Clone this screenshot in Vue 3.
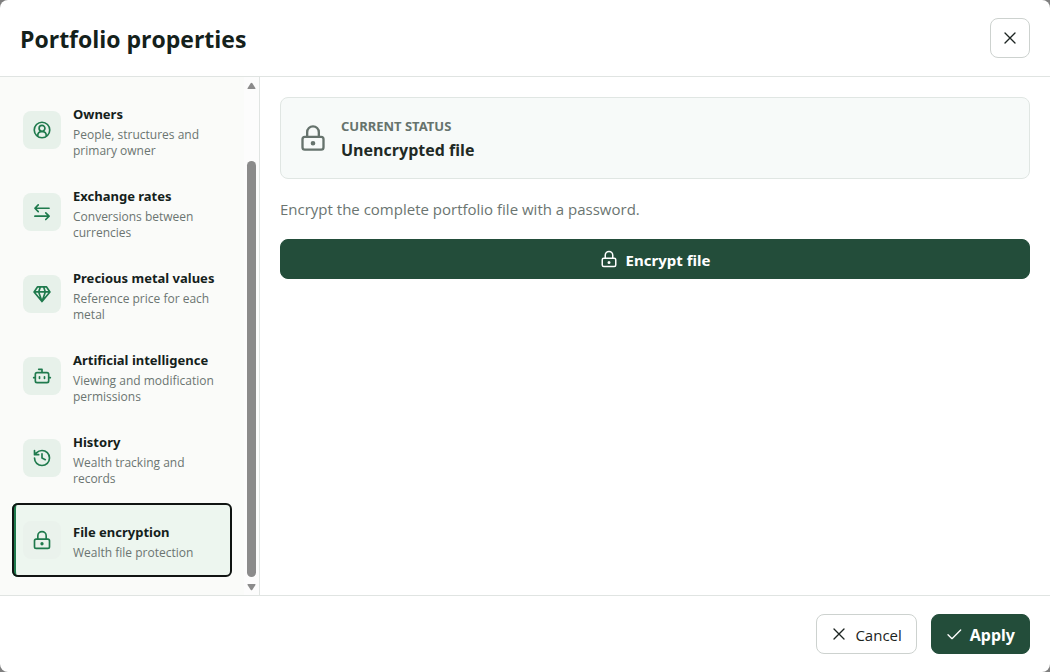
<script setup>
import { ref } from 'vue'

const sections = [
  { id: 'owners', icon: 'user', title: 'Owners', text: 'People, structures and primary owner' },
  { id: 'rates', icon: 'exchange', title: 'Exchange rates', text: 'Conversions between currencies' },
  { id: 'metals', icon: 'diamond', title: 'Precious metal values', text: 'Reference price for each metal' },
  { id: 'ai', icon: 'bot', title: 'Artificial intelligence', text: 'Viewing and modification permissions' },
  { id: 'history', icon: 'history', title: 'History', text: 'Wealth tracking and records' },
  { id: 'encryption', icon: 'lock', title: 'File encryption', text: 'Wealth file protection' },
]
const active = ref('encryption')

const icons = {
  user: 'M2.700 12a9.300 9.300 0 1 0 18.600 0a9.300 9.300 0 1 0 -18.600 0M8.500 10a3.500 3.500 0 1 0 7 0a3.500 3.500 0 1 0 -7 0M7 19.500v-1.500a4 4 0 0 1 4 -4h2a4 4 0 0 1 4 4v1.500',
  exchange: 'M20.500 7.500H3.500M7.500 3.500L3.500 7.500l4 4M3.500 17h17M16.500 13l4 4l-4 4',
  diamond: 'M6.500 3.500h11l4 6l-9.500 11.500l-9.500 -11.500zM2.500 9.500h19M10 3.500l-2 6l4 11.500l4 -11.500l-2 -6',
  bot: 'M12 8V4H8M6 8h12a2 2 0 0 1 2 2v8a2 2 0 0 1 -2 2H6a2 2 0 0 1 -2 -2v-8a2 2 0 0 1 2 -2zM2 14h2M20 14h2M9 13v2M15 13v2',
  history: 'M3 12a9 9 0 1 0 9 -9a9.750 9.750 0 0 0 -6.740 2.740L3 8M3 3v5h5M12 7v5l4 2',
  lock: 'M5 11h14a2 2 0 0 1 2 2v7a2 2 0 0 1 -2 2H5a2 2 0 0 1 -2 -2v-7a2 2 0 0 1 2 -2zM7 11V7a5 5 0 0 1 10 0v4M11 16.500a1 1 0 1 0 2 0a1 1 0 1 0 -2 0',
  close: 'M4.500 4.500l15 15M19.500 4.500L4.500 19.500',
  check: 'M3 13l6 6L22 6',
}
</script>

<template>
  <section class="dialog" role="dialog" aria-labelledby="dialog-title">
    <header class="head">
      <h1 id="dialog-title">Portfolio properties</h1>
      <button class="btn close" type="button" aria-label="Close">
        <svg class="i16" viewBox="0 0 24 24"><path :d="icons.close" /></svg>
      </button>
    </header>

    <div class="body">
      <aside class="side">
        <nav class="list" aria-label="Sections">
          <button
            v-for="s in sections"
            :key="s.id"
            type="button"
            class="item"
            :class="{ active: s.id === active }"
            @click="active = s.id"
          >
            <span class="tile">
              <svg class="i20" viewBox="0 0 24 24"><path :d="icons[s.icon]" /></svg>
            </span>
            <span class="label">
              <strong>{{ s.title }}</strong>
              <small>{{ s.text }}</small>
            </span>
          </button>
        </nav>
        <div class="scrollbar" aria-hidden="true">
          <svg viewBox="0 0 10 8"><path d="M4 1.500Q5 0 6 1.500L9.500 7Q10 8 9 8H1Q0 8 .5 7z" /></svg>
          <div class="track"><div class="thumb"></div></div>
          <svg viewBox="0 0 10 8"><path d="M4 6.500Q5 8 6 6.500L9.500 1Q10 0 9 0H1Q0 0 .5 1z" /></svg>
        </div>
      </aside>

      <main class="main">
        <div class="status">
          <svg class="i28" viewBox="0 0 24 24"><path :d="icons.lock" /></svg>
          <div>
            <div class="caption">CURRENT STATUS</div>
            <div class="state">Unencrypted file</div>
          </div>
        </div>
        <p>Encrypt the complete portfolio file with a password.</p>
        <button class="btn primary" type="button">
          <svg class="i18" viewBox="0 0 24 24"><path :d="icons.lock" /></svg>
          <span>Encrypt file</span>
        </button>
      </main>
    </div>

    <footer class="foot">
      <button class="btn" type="button">
        <svg class="i16" viewBox="0 0 24 24"><path :d="icons.close" /></svg>
        <span>Cancel</span>
      </button>
      <button class="btn primary" type="button">
        <svg class="i16" viewBox="0 0 24 24"><path :d="icons.check" /></svg>
        <span>Apply</span>
      </button>
    </footer>
  </section>
</template>

<style>
body {
  background: #7f7f7f;
}
</style>

<style scoped>
* {
  box-sizing: border-box;
}
.dialog {
  display: flex;
  flex-direction: column;
  min-height: 100vh;
  overflow: hidden;
  border-radius: 8px;
  background: #fff;
  color: #14211b;
  font-family: "Open Sans", "Noto Sans", sans-serif;
  font-size: 15px;
}
.head {
  display: flex;
  align-items: center;
  justify-content: space-between;
  padding: 18px 20px;
  border-bottom: 1px solid #e0e4e2;
}
h1 {
  margin: 0;
  padding-top: 2px;
  font-size: 23px;
  line-height: 32px;
  font-weight: 700;
}
svg {
  flex: none;
  fill: none;
  stroke: currentColor;
  stroke-width: 2;
  stroke-linecap: round;
  stroke-linejoin: round;
}
.i16 {
  width: 16px;
  height: 16px;
}
.i18 {
  width: 18px;
  height: 18px;
}
.i20 {
  width: 20px;
  height: 20px;
}
.i28 {
  width: 28px;
  height: 28px;
}
.btn {
  display: flex;
  align-items: center;
  justify-content: center;
  gap: 8px;
  height: 40px;
  padding: 0 14px;
  border: 1px solid #cdd2cf;
  border-radius: 8px;
  background: #fff;
  color: #1c2421;
  font: inherit;
}
.btn span {
  padding-top: 2px;
}
.close {
  width: 40px;
  padding: 0;
}
.primary {
  border-color: #234d3a;
  background: #234d3a;
  color: #fff;
  font-family: "Noto Sans", sans-serif;
  font-size: 16px;
  font-weight: 700;
}
.main .primary {
  width: 100%;
  font-size: 15px;
}
.body {
  display: flex;
  flex: 1;
}
.side {
  display: flex;
  flex: none;
  width: 260px;
  border-right: 1px solid #e0e4e2;
  background: #fafbf9;
}
.list {
  display: flex;
  flex: 1;
  flex-direction: column;
  justify-content: flex-end;
  gap: 8px;
  padding: 16px 12px 18px;
}
.item {
  display: flex;
  align-items: center;
  gap: 12px;
  height: 74px;
  padding: 0 4px 0 7px;
  border: 0;
  border-left: 4px solid transparent;
  border-radius: 6px;
  background: transparent;
  color: inherit;
  font: inherit;
  text-align: left;
}
.item.active {
  border-left-color: #1f7a4d;
  background: #edf6ef;
  outline: 2px solid #101412;
  outline-offset: -2px;
}
.tile {
  display: flex;
  flex: none;
  align-items: center;
  justify-content: center;
  width: 38px;
  height: 38px;
  border-radius: 8px;
  background: #e7f1ea;
  color: #1f7a4d;
}
.active .tile {
  background: #eaf2ec;
}
.label {
  display: flex;
  flex-direction: column;
  gap: 4px;
  padding-top: 3px;
}
.label strong {
  font-family: "Noto Sans", sans-serif;
  font-size: 13px;
  line-height: 18px;
  white-space: nowrap;
}
.label small {
  color: #6b7571;
  font-size: 12px;
  line-height: 16px;
}
.scrollbar {
  display: flex;
  flex-direction: column;
  align-items: center;
  gap: 4px;
  width: 15px;
  padding: 5px 0 4px;
  background: #fcfcfc;
}
.scrollbar svg {
  width: 9px;
  height: 7px;
  fill: #8b8b8b;
  stroke: none;
}
.track {
  display: flex;
  flex: 1;
  align-items: flex-end;
  padding-bottom: 3px;
}
.thumb {
  width: 9px;
  height: 86%;
  border-radius: 5px;
  background: #8b8b8b;
}
.main {
  flex: 1;
  padding: 20px;
}
.status {
  display: flex;
  align-items: center;
  gap: 14px;
  padding: 16px 18px;
  border: 1px solid #e0e6e3;
  border-radius: 8px;
  background: #f7faf9;
  color: #66736d;
}
.caption {
  font-family: "Noto Sans", sans-serif;
  font-size: 13px;
  line-height: 24px;
  font-weight: 700;
}
.state {
  color: #1f2a25;
  font-size: 16px;
  line-height: 24px;
  font-weight: 700;
}
p {
  margin: 19px 0;
  color: #6b7571;
  line-height: 22px;
}
.foot {
  display: flex;
  justify-content: flex-end;
  gap: 14px;
  padding: 18px 20px;
  border-top: 1px solid #e0e4e2;
}
</style>
